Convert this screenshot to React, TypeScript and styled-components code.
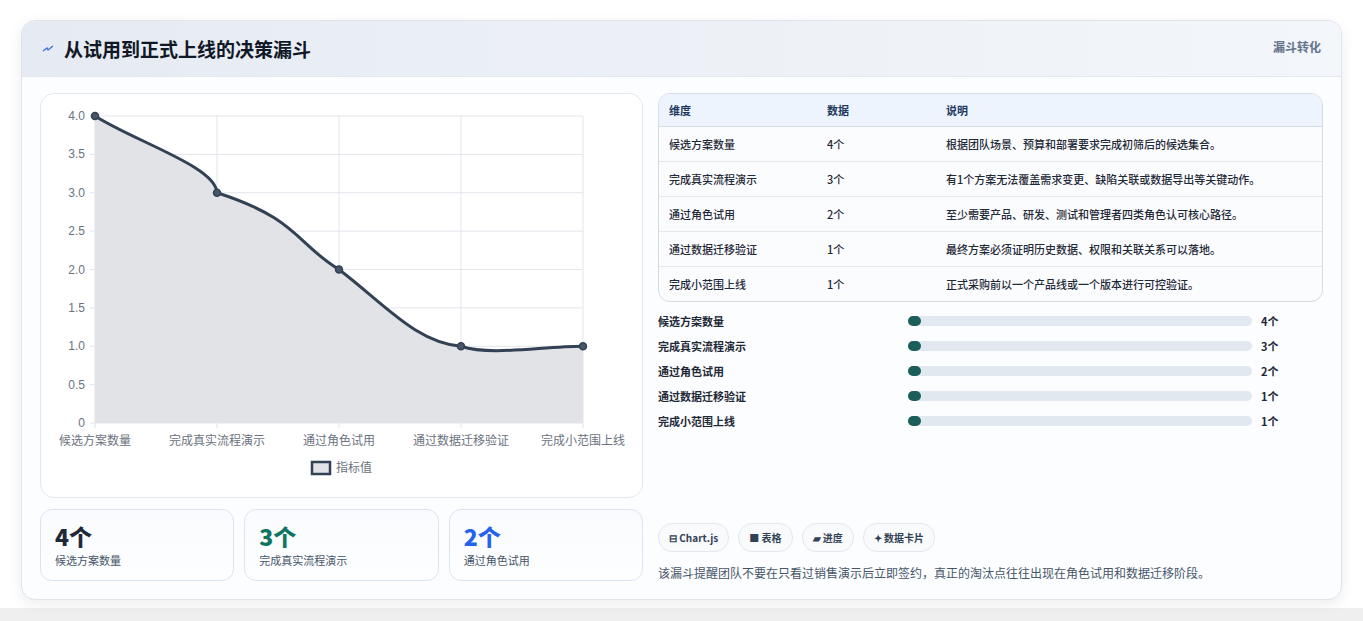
import React from 'react'
import styled, { createGlobalStyle } from 'styled-components'

const GlobalStyle = createGlobalStyle`
  html, body { margin: 0; background: #ffffff; }
  body { font-family: "Noto Sans CJK SC", "Noto Sans", sans-serif; color: #1f2937; }
`

const labels = ['候选方案数量', '完成真实流程演示', '通过角色试用', '通过数据迁移验证', '完成小范围上线']
const values = [4, 3, 2, 1, 1]
const notes = [
  '根据团队场景、预算和部署要求完成初筛后的候选集合。',
  '有1个方案无法覆盖需求变更、缺陷关联或数据导出等关键动作。',
  '至少需要产品、研发、测试和管理者四类角色认可核心路径。',
  '最终方案必须证明历史数据、权限和关联关系可以落地。',
  '正式采购前以一个产品线或一个版本进行可控验证。',
]

const Page = styled.div`
  padding: 20px 21px 20px;
  min-height: 621px;
  box-sizing: border-box;
  background: linear-gradient(#fff 0, #fff 608px, #efefef 608px);
`

const Card = styled.section`
  border: 1px solid #dfe3ea;
  border-radius: 14px;
  overflow: hidden;
  background: #fcfdfe;
  box-shadow: 0 4px 14px rgba(15, 23, 42, 0.08);
`

const Header = styled.header`
  height: 55px;
  display: flex;
  align-items: center;
  justify-content: space-between;
  padding: 0 20px;
  background: linear-gradient(90deg, #e6ebf3, #f3f6fa);
  border-bottom: 1px solid #e3e8ef;
`

const Title = styled.h2`
  margin: 0;
  font-size: 19px;
  font-weight: 700;
  color: #111827;
  display: flex;
  align-items: center;
  gap: 10px;
`

const Tag = styled.span`
  font-size: 12px;
  font-weight: 700;
  color: #64748b;
  align-self: flex-start;
  margin-top: 17px;
`

const Body = styled.div`
  display: grid;
  grid-template-columns: 603px 1fr;
  gap: 15px;
  padding: 16px 18px 18px;
`

const Col = styled.div`
  display: flex;
  flex-direction: column;
`

const ChartBox = styled.div`
  height: 403px;
  border: 1px solid #e2e8f0;
  border-radius: 14px;
  background: #fff;
`

const Stats = styled.div`
  display: grid;
  grid-template-columns: repeat(3, 1fr);
  gap: 10px;
  margin-top: 11px;
`

const Stat = styled.div`
  height: 72px;
  border: 1px solid #dbe5f1;
  border-radius: 12px;
  background: linear-gradient(#f9fbfe, #fdfeff);
  padding: 12px 14px 0;
  box-sizing: border-box;
`

const StatValue = styled.div<{ $color: string }>`
  font-size: 23px;
  font-weight: 800;
  line-height: 28px;
  color: ${p => p.$color};
`

const StatLabel = styled.div`
  font-size: 11px;
  color: #475569;
  margin-top: 2px;
`

const Table = styled.table`
  width: 100%;
  border-collapse: separate;
  border-spacing: 0;
  border: 1px solid #d5dce6;
  border-radius: 12px;
  overflow: hidden;
  font-size: 11px;
  background: #fbfcfe;
`

const Th = styled.th`
  text-align: left;
  height: 32px;
  padding: 0 10px;
  background: #edf4fd;
  color: #1e3a5f;
  font-weight: 700;
  border-bottom: 1px solid #d5dce6;
`

const Td = styled.td<{ $last?: boolean }>`
  height: 34px;
  padding: 0 10px;
  color: #1f2937;
  font-weight: 500;
  border-bottom: ${p => (p.$last ? 'none' : '1px solid #e3e8ef')};
`

const Bars = styled.div`
  display: flex;
  flex-direction: column;
  gap: 8px;
  margin-top: 10px;
`

const BarRow = styled.div`
  display: grid;
  grid-template-columns: 241px 344px 1fr;
  align-items: center;
  gap: 9px;
  font-size: 11px;
  font-weight: 600;
  color: #1f2937;
  height: 17px;
`

const Track = styled.div`
  height: 10px;
  border-radius: 5px;
  background: #e2e8f0;
`

const Fill = styled.div`
  height: 10px;
  border-radius: 5px;
  background: #1b5e5a;
`

const Chips = styled.div`
  display: flex;
  gap: 9px;
  margin-top: auto;
`

const Chip = styled.span`
  height: 27px;
  padding: 0 10px;
  border: 1px solid #e2e8f0;
  border-radius: 14px;
  background: #f8fafc;
  display: inline-flex;
  align-items: center;
  gap: 3px;
  font-size: 10px;
  font-weight: 700;
  color: #334155;
`

const Note = styled.p`
  margin: 12px 0 0;
  font-size: 12px;
  color: #475569;
`

const px = (i: number) => 54 + i * 122
const py = (v: number) => 329 - v * 76.75

function Chart() {
  const pts = values.map((v, i) => [px(i), py(v)])
  const d =
    `M${pts[0][0]},${pts[0][1]} C95,${pts[0][1] + 26} 175,${pts[1][1] - 26} ${pts[1][0]},${pts[1][1]} ` +
    `C257,${pts[1][1] + 26} 255,${pts[2][1] - 26} ${pts[2][0]},${pts[2][1]} ` +
    `C345,${pts[2][1] + 36} 375,${pts[3][1] - 4} ${pts[3][0]},${pts[3][1]} ` +
    `C450,${pts[3][1] + 10} 500,${pts[4][1]} ${pts[4][0]},${pts[4][1]}`
  return (
    <svg width="603" height="403" viewBox="0 0 603 403">
      {[0, 0.5, 1, 1.5, 2, 2.5, 3, 3.5, 4].map(v => (
        <g key={v}>
          <line x1={49} x2={542} y1={py(v)} y2={py(v)} stroke="#e2e5ec" />
          <text x={44} y={py(v) + 4} textAnchor="end" fontSize="12" fill="#6b7280" fontFamily="Liberation Sans, sans-serif">
            {v === 0 ? '0' : v.toFixed(1)}
          </text>
        </g>
      ))}
      {labels.map((_, i) => (
        <line key={i} x1={px(i)} x2={px(i)} y1={22} y2={334} stroke="#e2e5ec" />
      ))}
      <path d={`${d} L542,329 L54,329 Z`} fill="#e2e3e6" />
      <path d={d} fill="none" stroke="#334155" strokeWidth="3" />
      {pts.map(([x, y], i) => (
        <circle key={i} cx={x} cy={y} r="3.5" fill="#475569" stroke="#334155" strokeWidth="1.5" />
      ))}
      {labels.map((l, i) => (
        <text key={l} x={px(i)} y={351} textAnchor="middle" fontSize="12" fill="#6b7280">
          {l}
        </text>
      ))}
      <rect x={271} y={368} width={18} height={12} fill="#e2e3e6" stroke="#334155" strokeWidth="2.5" />
      <text x={295} y={378} fontSize="12" fill="#6b7280">指标值</text>
    </svg>
  )
}

export default function App() {
  return (
    <Page>
      <GlobalStyle />
      <Card>
        <Header>
          <Title>
            <svg width="12" height="10" viewBox="0 0 12 10">
              <path d="M1 7 L5 4 L6 6 L11 2" fill="none" stroke="#3b6fd8" strokeWidth="1.3" />
            </svg>
            从试用到正式上线的决策漏斗
          </Title>
          <Tag>漏斗转化</Tag>
        </Header>
        <Body>
          <Col>
            <ChartBox>
              <Chart />
            </ChartBox>
            <Stats>
              <Stat>
                <StatValue $color="#1f2937">4个</StatValue>
                <StatLabel>候选方案数量</StatLabel>
              </Stat>
              <Stat>
                <StatValue $color="#0f7561">3个</StatValue>
                <StatLabel>完成真实流程演示</StatLabel>
              </Stat>
              <Stat>
                <StatValue $color="#2563eb">2个</StatValue>
                <StatLabel>通过角色试用</StatLabel>
              </Stat>
            </Stats>
          </Col>
          <Col>
            <Table>
              <thead>
                <tr>
                  <Th style={{ width: 138 }}>维度</Th>
                  <Th style={{ width: 99 }}>数据</Th>
                  <Th>说明</Th>
                </tr>
              </thead>
              <tbody>
                {labels.map((l, i) => (
                  <tr key={l}>
                    <Td $last={i === 4}>{l}</Td>
                    <Td $last={i === 4}>{values[i]}个</Td>
                    <Td $last={i === 4}>{notes[i]}</Td>
                  </tr>
                ))}
              </tbody>
            </Table>
            <Bars>
              {labels.map((l, i) => (
                <BarRow key={l}>
                  <span>{l}</span>
                  <Track>
                    <Fill style={{ width: 13 }} />
                  </Track>
                  <span>{values[i]}个</span>
                </BarRow>
              ))}
            </Bars>
            <Chips>
              <Chip>⊟ Chart.js</Chip>
              <Chip>■ 表格</Chip>
              <Chip>▰ 进度</Chip>
              <Chip>✦ 数据卡片</Chip>
            </Chips>
            <Note>该漏斗提醒团队不要在只看过销售演示后立即签约，真正的淘汰点往往出现在角色试用和数据迁移阶段。</Note>
          </Col>
        </Body>
      </Card>
    </Page>
  )
}
